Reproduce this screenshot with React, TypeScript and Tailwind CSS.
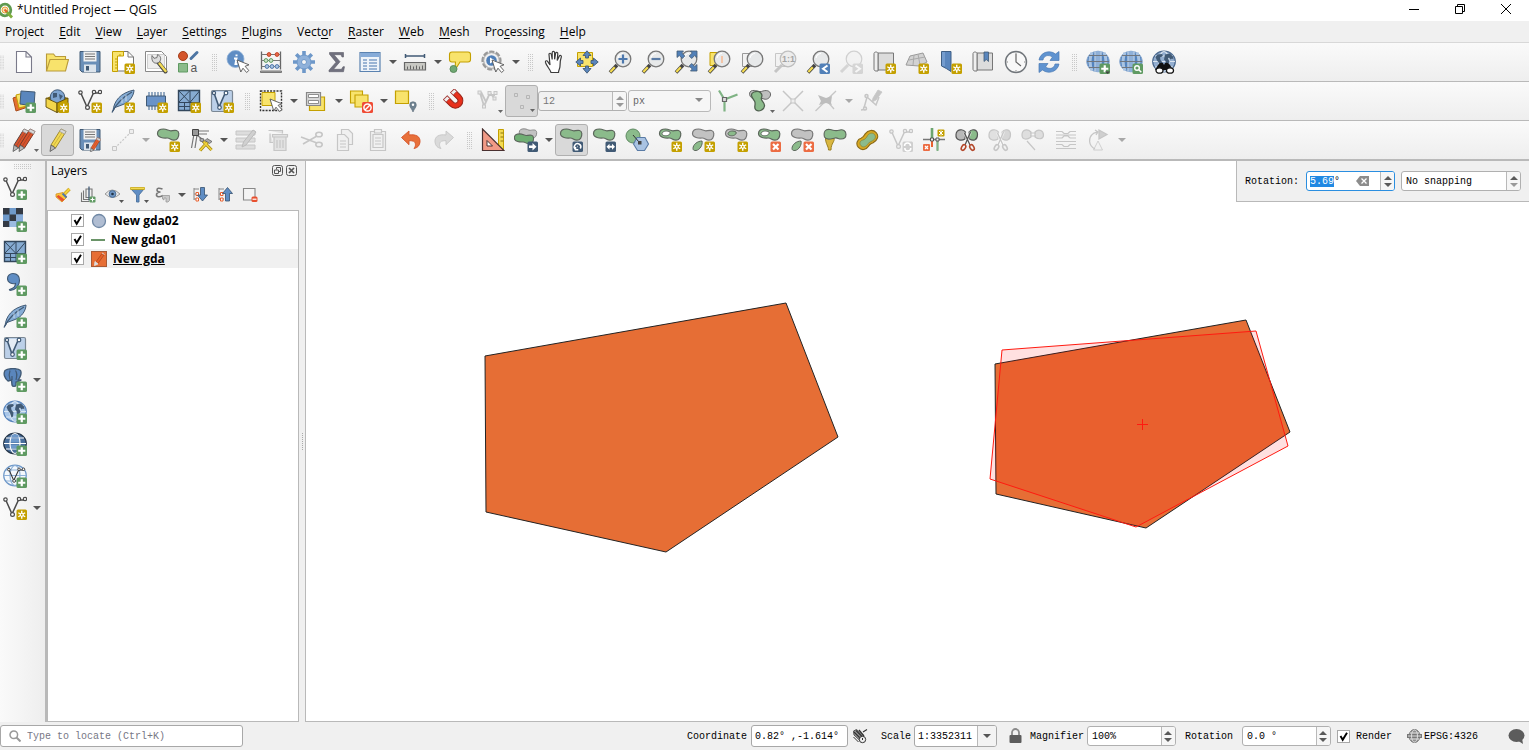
import { useEffect, useRef, useState } from 'react'
import type { ReactNode } from 'react'

const NAVY = '#415a75'
const GREEN = '#8bbb8b'
const YELLOW = '#f8e36c'
const GOLD = '#c4a000'
const GREY = '#c6c6c6'

const BLOB = 'M1.500 5.500C1.500 2 4 1 7.500 1C11 1 12.500 3 15 2.800C18 2.500 22.500 1.200 22.800 5.500C23 9.500 21 12.200 18 12.200C14.500 12.200 14 9.800 11 10C8 10.200 1.500 10 1.500 5.500Z'

/* ---------- badges ---------- */
const badge = (fill: string, mark: ReactNode) => (
  <g>
    <rect x="13.500" y="13.500" width="10.500" height="10.500" rx="1.500" fill={fill} />
    {mark}
  </g>
)
const newBadge = badge(GOLD, <g stroke="#fff" strokeWidth="1.400"><path d="M18.750 14.800v7.900M15.300 16.750l6.900 4M22.200 16.750l-6.900 4" /><circle cx="18.750" cy="18.750" r="2" fill="#fff" stroke="none" /><circle cx="18.750" cy="18.750" r=".9" fill={GOLD} stroke="none" /></g>)
const addBadge = badge('#5f9a62', <path d="M18.750 15.200v7.100M15.200 18.750h7.100" stroke="#fff" strokeWidth="2.200" />)
const delBadge = badge('#ec6c43', <path d="M16 16l5.500 5.500M21.500 16L16 21.500" stroke="#fff" strokeWidth="2.200" />)
const rotBadge = badge(NAVY, <path d="M16.800 21.500a3.200 3.200 0 1 1 4.500-1M18.300 18.500h.5M16.500 19v2.800h2.800" stroke="#fff" strokeWidth="1.500" fill="none" />)
const moveBadge = badge(NAVY, <path d="M14.500 18.750l3-3v2h2.500v-2l3 3-3 3v-2h-2.500v2z" fill="#fff" />)
const arrowBadge = badge(NAVY, <path d="M15 17.500h3.500v-2.500l4 3.700-4 3.700v-2.500H15z" fill="#fff" />)

/* ---------- shared shapes ---------- */
const blob = (fill: string, stroke = '#5c665c') => <path d={BLOB} fill={fill} stroke={stroke} strokeWidth="1.200" />
const pencil = (fill: string, edge: string) => (
  <g>
    <path d="M16 1l5 2.500L10.500 20 6 17z" fill={fill} stroke={edge} strokeWidth="1" />
    <path d="M18.500 2.300L8 18.500" stroke={edge} strokeWidth=".8" opacity=".6" />
    <path d="M16 1l5 2.500-1.500 2.500-5-2.700z" fill="#d8d8d8" stroke="#9a9a9a" strokeWidth=".7" />
    <path d="M6 17l4.500 3L5 23.500z" fill="#b9b9b9" stroke="#555" strokeWidth=".8" />
  </g>
)
const lens = (mark?: ReactNode) => (
  <g>
    <path d="M9 15L2 22.500" stroke="#444" strokeWidth="3.600" />
    <path d="M6.800 17.200L2.300 22" stroke="#f5dc50" strokeWidth="2.200" />
    <circle cx="15" cy="9" r="7.800" fill="#e7e9ea" stroke="#777" strokeWidth="1.300" />
    <path d="M10 8a5.500 5.500 0 0 1 5-4.500" stroke="#fff" strokeWidth="1.200" fill="none" />
    {mark}
  </g>
)
const cursor = <path d="M11 10l3.800 12 2.200-3.800 3.600 4.300 2.200-2-3.700-4.200 3.900-1.500z" fill="#fff" stroke="#555" strokeWidth=".9" />
const vNodes = (stroke = '#4a4a4a', fill = '#fff') => (
  <g stroke={stroke} fill="none" strokeWidth="1.200">
    <path d="M3 4.500l6 13.500 6.500-14H22" strokeWidth="1.500" />
    <g fill={fill}>
      <circle cx="2.500" cy="3.500" r="1.700" /><circle cx="16" cy="3" r="1.700" />
      <circle cx="22" cy="3" r="1.700" /><circle cx="9.500" cy="18.500" r="1.900" />
    </g>
  </g>
)
const feather = (
  <g>
    <path d="M2 22C3 12 9 4 23 1c0 5-4 12-11 14.500L4 18.500z" fill="#86add6" stroke={NAVY} strokeWidth="1" />
    <path d="M1 23.500C5 15 12 8 21 3" stroke={NAVY} strokeWidth="1.300" fill="none" />
    <path d="M11 9v5M15 6v6" stroke="#d5e3f3" strokeWidth=".8" />
  </g>
)
const globe = (fill: string, line: string, edge: string) => (
  <g fill="none" stroke={line} strokeWidth="1.200">
    <ellipse cx="12" cy="11.500" rx="11.300" ry="10.300" fill={fill} stroke={edge} />
    <ellipse cx="12" cy="11.500" rx="5" ry="10" />
    <path d="M1 11.500h22M3 6h18M3 17h18" />
  </g>
)
const webGlobe = (
  <g fill="none">
    <ellipse cx="12" cy="11.500" rx="11.300" ry="10.300" fill="#5484be" stroke="#8aa9cf" />
    <path d="M6 2.500q-4 9 0 18M18 2.500q4 9 0 18" stroke="#aac4e2" strokeWidth="3" />
    <path d="M12 1v21" stroke="#8fb0d8" strokeWidth="5" />
    <path d="M9 1.500v20M15 1.500v20" stroke="#dfe8f2" />
    <path d="M1 11.500h22M3 5.500h18M3 17.500h18" stroke="#70767e" strokeWidth="1.100" />
  </g>
)
const continents = (
  <path d="M3.500 7l2-2.500 4-.5 1.500 1-1 1.500-2 1 .5 2.500 2 2.500-.5 4-1.500 1-1.500-4.500-2-2.500zM13 4.500l5-1 3 3 .5 3-1.500-1-1.500 1-1.500-2-1 1 1.500 3-2 4-1.500-.5-.5-4-1.500-1.500.5-2.500z" fill={NAVY} />
)
const floppy = (
  <g>
    <path d="M2 1.500h20v20.500H4l-2-2z" fill="#6a8fb8" stroke={NAVY} strokeWidth="1" />
    <path d="M5.500 1.500h13v10h-13z" fill="#f1f1f1" />
    <path d="M7 4h10M7 6.500h10M7 9h10" stroke="#777" strokeWidth="1" />
    <path d="M6 14.500h12V22H6z" fill="#dce4ec" /><path d="M8 16h3v4.500H8z" fill={NAVY} />
  </g>
)
const mesh = (
  <g>
    <path d="M1.500 1.500h21v20h-21z" fill="#86abd2" stroke="#33475c" strokeWidth="1.400" />
    <path d="M1.500 13.500h21M13 1.500V21.500M1.500 1.500L13 13.500M13 1.500L1.500 13.500M22.500 2L13 13.500M7.500 13.500v8M1.500 17.500h11.500" stroke="#33475c" strokeWidth="1" fill="none" />
    <path d="M13.500 14h8.500v3h-8.500z" fill="#6c93bf" />
  </g>
)
const vBox = (
  <g>
    <rect x="1.500" y="1.500" width="21" height="21" rx="1.500" fill="#bcd0e8" stroke="#7a8794" strokeWidth="1.200" />
    <path d="M3 3l6 16 6-16z" fill="#e4ecf5" />
    <g fill="#fff" stroke={NAVY} strokeWidth="1.200"><path d="M4 4l5 14 6-13.500" fill="none" strokeWidth="1.600" /><circle cx="4" cy="4" r="1.600" /><circle cx="16" cy="4" r="1.800" /><circle cx="9.500" cy="18.500" r="1.800" /></g>
  </g>
)
const scissors = (blade: string, handle: string, a: string, b: string) => (
  <g>
    <path d="M10.500 4C8 .5 1.500 1 1 6.500S6 13.500 10 11z" fill={a} stroke={blade} strokeWidth="1.200" />
    <path d="M14 4c2.500-3.500 8.500-3 8.500 2.500S18.500 13.500 14.500 11z" fill={b} stroke={blade} strokeWidth="1.200" />
    <path d="M9.500 5l5.500 12M15.500 4L10 17" stroke="#fff" strokeWidth="2.800" opacity=".6" />
    <path d="M9.500 5l5.500 12M15.500 4L10 17" stroke={blade} strokeWidth="1.300" />
    <ellipse cx="8.500" cy="19.500" rx="1.900" ry="3" transform="rotate(30 8.500 19.500)" stroke={handle} strokeWidth="1.600" />
    <ellipse cx="17" cy="19.500" rx="1.900" ry="3" transform="rotate(-30 17 19.500)" stroke={handle} strokeWidth="1.600" />
  </g>
)
const scroll = (
  <g>
    <path d="M6 3h15.500v17H6z" fill="#dcdcdc" stroke="#777" strokeWidth="1" />
    <path d="M2 3.500c0-2 4-2 4 0v17.500H4c-1.500 0-2-1-2-2z" fill="#efefef" stroke="#777" strokeWidth="1" />
  </g>
)
const hole = <path d="M4 5.500C5 2.500 10 2.500 12 4c1 1.500-1 3-2.500 3.500C7 8.200 3.800 7.500 4 5.500z" fill="#fff" stroke="#5c665c" />
const leaf = <path d="M2 20.500c0-4 4.500-7.500 9-7.500 1 3.500-2 9-6 9.500-2 .2-3-.5-3-2z" fill={GREEN} stroke="#5c665c" />

const icons: Record<string, ReactNode> = {
  newProject: <path d="M4.500 1.500H14l5.500 5.500v15.500h-15zM14 1.500V7h5.500" fill="#fff" stroke="#7a7a8a" strokeWidth="1.100" />,
  open: <g fill={YELLOW} stroke="#b89a3a" strokeWidth="1.100"><path d="M1.500 21V4h7l2 2.500h10V10" /><path d="M1.500 21L5 9.500h18.500L20.500 21z" /></g>,
  save: floppy,
  newLayout: <g><path d="M5 1.500h12l5.500 5.500v14H5z" fill="#fff" stroke="#777" /><path d="M17 1.500V7h5.500" fill="none" stroke="#777" /><path d="M1.500 1.500h11V6h-6v15.500h-5z" fill={YELLOW} stroke={GOLD} /><path d="M4 9h2.500M4 12h2.500M4 15h2.500M4 18h2.500M9 4v2" stroke={GOLD} />{newBadge}</g>,
  layoutManager: <g><path d="M1.500 1.500h16l5 5v15h-21z" fill="#fff" stroke="#888" /><path d="M3.500 4.500h17v14h-17z" fill="#eee" stroke="#bbb" strokeWidth=".7" /><path d="M14 12l7.500 9.500" stroke="#444" strokeWidth="4" strokeLinecap="round" /><path d="M15.500 13.500l6 7.500" stroke="#f3dc55" strokeWidth="2.400" strokeLinecap="round" /><path d="M8 5.500l2 2.800 3-.7.500-3c3 1 4 4 2.500 6.500s-5 2.500-6.500 1.200S7.500 8 8 5.500z" fill="#ddd" stroke="#666" strokeWidth=".9" /></g>,
  style: <g><circle cx="6" cy="6" r="4.500" fill="#d4552b" stroke="#a33f1c" /><path d="M14 8.500L20 2.500" stroke="#4d75a3" strokeWidth="3" strokeLinecap="round" /><path d="M1.500 13.500h9v8.500h-9z" fill={GREEN} stroke="#5f9a62" /><text x="13.500" y="21.500" className="text-[12px]" fill="#555" fontFamily="Liberation Sans, sans-serif">a</text></g>,
  identify: <g><circle cx="9.500" cy="9" r="8.500" fill="#5f8dc4" stroke="#8fb0d6" strokeWidth=".8" /><path d="M8 8.500h2.500l-1 5.500h2M10.500 4.500v1.800" stroke="#fff" strokeWidth="2" fill="none" />{cursor}</g>,
  abacus: <g fill="none" strokeWidth="1"><path d="M2.500 1.500v18M21.500 1.500v18" stroke="#666" strokeWidth="1.300" /><path d="M2.500 4.500h19M2.500 10.500h19M2.500 16.500h19" stroke="#777" /><path d="M1.500 21h21v1.500h-21z" fill="#aaa" stroke="#777" /><g stroke="#c4472a" fill="#e9694a"><circle cx="10" cy="4.500" r="1.900" /><circle cx="18" cy="4.500" r="1.900" /></g><g stroke="#5f9a62" fill="#c8e0c8"><circle cx="7" cy="10.500" r="1.900" /><circle cx="12" cy="10.500" r="1.900" /></g><g stroke="#4f77a8" fill="#a9c3e3"><circle cx="8" cy="16.500" r="1.900" /><circle cx="13" cy="16.500" r="1.900" /><circle cx="18" cy="16.500" r="1.900" /></g></g>,
  gear: <g stroke="#6e98c9" fill="none"><path d="M12 1v22M1 12h22M4.200 4.200l15.600 15.600M19.800 4.200L4.200 19.800" strokeWidth="3.600" /><circle cx="12" cy="12" r="7" fill="#8fb1da" strokeWidth="1" /><circle cx="12" cy="12" r="2.500" fill="#f5f5f5" strokeWidth="1" /></g>,
  sigma: <path d="M4.500 2.500h14v4.500h-1.500l-1-2.300H9l6 7-6.500 7.600h8l1.500-2.600h1.500l-1 5H4v-1.500l7-8-6.500-8z" fill="#70707e" stroke="#5e5e6a" strokeWidth=".6" />,
  table: <g><path d="M2 2.500h20v19H2z" fill="#eef3f9" stroke="#5a82b0" strokeWidth="1.200" /><path d="M2.500 3h19v4h-19z" fill="#86abd8" /><path d="M5 10h4M11 10h8M5 13h4M11 13h8M5 16h4M11 16h8M5 19h4M11 19h8" stroke="#7fa0c8" strokeWidth="1.300" /></g>,
  ruler: <g><path d="M2 6h20M2.500 4v4M21.500 4v4" stroke={NAVY} strokeWidth="1.500" /><path d="M1.500 12.500h21v7.500h-21z" fill="#c9c9c4" stroke="#666" strokeWidth="1.200" /><path d="M4.500 19.500v-3M7.500 19.500v-4M10.500 19.500v-3M13.500 19.500v-4M16.500 19.500v-3M19.500 19.500v-4" stroke="#666" /></g>,
  mapTip: <g><path d="M4 2h16q2.500 0 2.500 2.500v5q0 2.500-2.500 2.500h-8l-5 8 .5-8H4q-2.500 0-2.500-2.500v-5Q1.500 2 4 2z" fill={YELLOW} stroke={GOLD} strokeWidth="1.100" /><circle cx="5.500" cy="19" r="3.500" fill="#6fa873" stroke="#5a8a5c" /></g>,
  action: <g><circle cx="10.500" cy="10.500" r="8.800" fill="#ddd" stroke="#999" strokeWidth="2.600" strokeDasharray="5 1.500" /><circle cx="10.500" cy="10.500" r="7.800" fill="#f0f0f0" stroke="#aaa" /><circle cx="10.500" cy="10.500" r="5.300" fill="#4f7fb8" /><path d="M9 7.500l5 3-5 3z" fill="#fff" />{cursor}</g>,
  pan: <path d="M8 22.500C7 19 3.500 16 2.500 12.500c-.5-2 1.500-2.300 2.300-.8L7 15 6 4.500C5.900 2.800 8 2.800 8.300 4.500l.9 5V2.800c0-2 2.300-2 2.400 0v6.500l1-5.800c.3-1.800 2.400-1.400 2.200.4l-.6 6.600 2-4.300c.8-1.600 2.700-.7 2.100.8C17 10.500 17 14 17 16c0 3-1.500 4-1.500 6.500z" fill="#fff" stroke="#3c3c3c" strokeWidth="1.200" transform="translate(1 0)" />,
  panSelection: <g><path d="M2.500 2.500h15v14h-15z" fill={YELLOW} stroke={GOLD} /><path d="M12 .8l4 4.700h-2.500V8h-3V5.500H8zM12 23.200l4-4.700h-2.500V16h-3v2.500H8zM.8 12l4.700-4v2.500H8v3H5.500V16zM23.200 12l-4.700-4v2.500H16v3h2.500V16z" fill="#5a86bd" stroke={NAVY} strokeWidth=".9" /></g>,
  zoomIn: lens(<path d="M15 4.500v9M10.500 9h9" stroke="#4d78ad" strokeWidth="2.200" />),
  zoomOut: lens(<path d="M10.500 9h9" stroke="#5a7ba5" strokeWidth="2.200" />),
  zoomFull: <g>{lens()}<path d="M3 1h6.500L7.800 3l3 3-2.500 2.500-3-3L3 7.500zM23 1h-6.500l1.700 2-3 3 2.500 2.500 3-3L23 7.500zM23 21h-6.500l1.700-2-3-3 2.500-2.500 3 3 2.300-2z" fill="#5180b8" stroke={NAVY} strokeWidth=".8" /></g>,
  zoomSelection: <g><path d="M3 2.500h12v13H3z" fill={YELLOW} stroke={GOLD} />{lens(<path d="M14 6h2v7h-2z" fill="#f3c5a8" />)}</g>,
  zoomLayer: <g><path d="M2.500 3.500h12v13h-12z" fill="#f2f2f2" stroke="#999" />{lens()}</g>,
  zoomNative: <g opacity=".5"><path d="M2.500 3.500h12v13h-12z" fill="#f2f2f2" stroke="#999" /><path d="M9 15L2 22" stroke="#999" strokeWidth="3" /><circle cx="15" cy="9" r="7.800" fill="#e4e4e4" stroke="#888" strokeWidth="1.200" /><text x="9" y="12" className="text-[9px] font-bold" fill="#555" fontFamily="Liberation Sans, sans-serif">1:1</text></g>,
  zoomLast: <g>{lens()}{badge('#5180b8', <path d="M21.500 15.500l-4.500 3.200 4.500 3.300" stroke="#fff" strokeWidth="2" fill="none" />)}</g>,
  zoomNext: <g opacity=".4"><path d="M9 15L2 22" stroke="#aaa" strokeWidth="3" /><circle cx="15" cy="9" r="7.800" fill="#eee" stroke="#999" strokeWidth="1.200" />{badge('#aaa', <path d="M16.500 15.500l4.500 3.200-4.500 3.300" stroke="#fff" strokeWidth="2" fill="none" />)}</g>,
  newMap: <g>{scroll}{newBadge}</g>,
  new3d: <g><path d="M1 15L5 6l13-3 4 9-8 4z" fill="#d2d2d2" stroke="#9a9a9a" /><path d="M4 10l16-3M9 5l-1 10M13 4l2 11" stroke="#aaa" fill="none" />{newBadge}</g>,
  newBookmark: <g><path d="M3.500 1.500h9.500v20l-4.700-3-4.800-2.500z" fill="#5a86bd" stroke="#3f5f85" /><path d="M4 2h3v14H4z" fill="#86abd8" opacity=".6" />{newBadge}</g>,
  bookmarks: <g>{scroll}<path d="M13 2h4.500v9.500l-2.200-2-2.300 2z" fill="#5a86bd" stroke={NAVY} strokeWidth=".8" /></g>,
  clock: <g><circle cx="12" cy="12" r="10.500" fill="#f8f8f8" stroke="#70757a" strokeWidth="1.400" /><path d="M12 4v8l5 4" stroke="#666" strokeWidth="1.200" fill="none" /><path d="M12 2.500v1.500M12 20v1.500M2.500 12H4M20 12h1.500" stroke="#888" /></g>,
  refresh: <g fill="#5f93d0" stroke="#4a7ab3" strokeWidth=".7"><path d="M2 10C3 3 12-1 18.500 4L22 1.500V10.500h-9L15.500 7C11 4 6.500 6 6 10z" /><path d="M22 14c-1 7-10 11-16.500 6L2 22.500V13.500h9L8.500 17c4.500 3 9 1 9.500-3z" /></g>,
  webAdd: <g>{webGlobe}{addBadge}<path d="M19 21.500h5L21.500 24z" fill="#444" /></g>,
  webSearch: <g>{webGlobe}{badge('#5f9a62', <g stroke="#fff" fill="none" strokeWidth="1.400"><circle cx="18" cy="18" r="2.300" /><path d="M19.800 19.800l2.500 2.500" /></g>)}</g>,
  webBinoculars: <g>{globe('#93aed0', '#dbe5f0', '#4c6a90')}{continents}<path d="M6 15q2-3 5-2l1 2 1-2q3-1 5 2l3 5H3z" fill="#111" /><ellipse cx="7.500" cy="20.500" rx="3.500" ry="2.700" fill="#fff" stroke="#111" strokeWidth="1.300" /><ellipse cx="18" cy="20.500" rx="3.500" ry="2.700" fill="#fff" stroke="#111" strokeWidth="1.300" /></g>,

  dataSource: <g><path d="M1 9l11-4 4 13-12 4z" fill="#e5702f" stroke="#a84c1c" /><path d="M4 6l12-3 3 13-12 3z" fill={YELLOW} stroke={GOLD} /><path d="M9 2l14 1-1 14-14-2z" fill="#5a86bd" stroke={NAVY} />{addBadge}</g>,
  newGpkg: <g><path d="M1 9l11-4 11 4-11 5z" fill="#8c6f10" /><circle cx="12.500" cy="8" r="7.200" fill="#7ea4d0" stroke={NAVY} /><path d="M8 4l4 0 0 4-4 1zM14 5l4 2-3 4z" fill={NAVY} /><path d="M1 9l11 5v9.500L1 18z" fill="#f3d64a" stroke="#5e4a08" strokeWidth=".9" /><path d="M23 9l-11 5v9.500L23 18z" fill={GOLD} stroke="#5e4a08" strokeWidth=".9" />{newBadge}</g>,
  newShp: <g>{vNodes()}{newBadge}</g>,
  newSpatialite: <g>{feather}{newBadge}</g>,
  newMemory: <g><path d="M5 3v18M8 3v18M11 3v18M14 3v18M17 3v18M20 3v18" stroke="#55789f" strokeWidth="1.200" /><path d="M2.500 7h19v10h-19z" fill="#6a93c8" stroke={NAVY} />{newBadge}</g>,
  newMesh: <g>{mesh}{newBadge}</g>,
  newVirtual: <g>{vBox}{newBadge}</g>,
  select: <g><path d="M1.500 2h21v19.500h-21z" fill="none" stroke="#333" strokeWidth="1.400" strokeDasharray="2 1.200" /><path d="M3 3.500h13v13H3z" fill={YELLOW} stroke={GOLD} />{cursor}</g>,
  selectValue: <g><path d="M5.500 8h15v13.500h-15z" fill={YELLOW} stroke={GOLD} strokeWidth="1.200" /><path d="M2.500 3.500h14v13h-14z" fill="#d8d8d8" stroke="#888" strokeWidth="1.200" /><path d="M4.500 5.500h10v3h-10zM4.500 11.500h10v3h-10z" fill="#fff" stroke="#777" strokeWidth=".8" /></g>,
  deselect: <g fill={YELLOW} stroke={GOLD} strokeWidth="1.100"><path d="M1.500 2h12v12h-12z" /><path d="M6 6h13v12H6z" /><rect x="13" y="13" width="11" height="11" rx="1.500" fill="#ef4b35" stroke="none" /><circle cx="18.500" cy="18.500" r="3.600" fill="none" stroke="#fff" strokeWidth="1.500" /><path d="M16 21l5-5" stroke="#fff" strokeWidth="1.500" /></g>,
  selectLocation: <g><path d="M1.500 2h13v12.500h-13z" fill={YELLOW} stroke={GOLD} strokeWidth="1.200" /><path d="M19 23c-1-3-3.300-4.500-3.300-7a3.300 3.300 0 0 1 6.600 0c0 2.500-2.300 4-3.300 7z" fill="#6f8290" stroke="#5a6b78" strokeWidth=".6" /><circle cx="19" cy="15.800" r="1.200" fill="#fff" /></g>,
  magnet: <g transform="rotate(-45 12 12)"><path d="M5 3v9a7.500 7.500 0 0 0 15 0V3h-5V12a2.500 2.500 0 0 1-5 0V3z" fill="#e8301c" stroke="#99261a" /><path d="M5 3h5v3.500H5zM15 3h5v3.500h-5z" fill="#eee" stroke="#a44" strokeWidth=".8" /></g>,
  snapV: <g stroke={GREY} fill="#e9e9e9"><path d="M4 4l4 13 5-11h6M5 3l5 10 4-9 5 6" strokeWidth="1.800" fill="none" /><rect x="2" y="2" width="3" height="3" /><rect x="12" y="2.500" width="3" height="3" /><rect x="18" y="2.500" width="3" height="3" /><rect x="17" y="8" width="3" height="3" /><rect x="6.500" y="16" width="3" height="3" /></g>,
  snapPts: <g stroke="#b5b5b5" fill="none"><path d="M5.500 4.500h3v3h-3zM17.500 6.500h3v3h-3zM11.500 16.500h3v3h-3z" /></g>,
  topo: <g><path d="M9.500 10.500L4 1.500M9.500 10.500l13-5M9.500 10.500v12" stroke="#7fb384" strokeWidth="2.200" /><path d="M7.500 8.500h4v4h-4z" fill="#ddd" stroke="#666" strokeWidth="1.200" /></g>,
  overlap: <g><path d="M3 2c5-2 7 2 12 0 5-1.500 8 1 7.500 4S19 11 16 10 10 8 6 9 0 4 3 2z" fill="#bfbfbf" stroke="#666" /><path d="M6 3c6-2 9 2 7.500 5.500s3.500 4.500 3 8.500-5.500 6-8.500 4 .5-6-1.500-9S1 5 6 3z" fill={GREEN} stroke="#4f604f" strokeWidth="1.300" /></g>,
  tracing: <g stroke={GREY} strokeWidth="1.500"><path d="M2 2l20 20M22 2L2 22" /><path d="M10 10h4v4h-4z" fill="#eee" strokeWidth="1" /></g>,
  selfSnap: <g stroke={GREY} strokeWidth="1.300"><path d="M1.500 22L22 2M13 12l7 8" /><path d="M4 6l8 3 6-2-1 7 1 2-6-2-7 2 2-4z" fill="#bdbdbd" stroke="none" /></g>,
  traceEdit: <g stroke={GREY} fill="none" strokeWidth="1.500"><path d="M2 21l6-1M5 19L8 8l9 8 3-8" /><path d="M14 9l5-8 4 2-6 8-4 2z" fill={GREY} strokeWidth=".8" /><circle cx="7.500" cy="7" r="1.500" fill="#eee" /><circle cx="6" cy="19.500" r="1.500" fill="#eee" /></g>,

  currentEdits: <g><g transform="translate(-4 0)">{pencil('#d9532c', '#5a4440')}</g><g transform="translate(2 0)">{pencil('#d9532c', '#7a3a28')}</g></g>,
  toggleEdit: pencil('#f3da52', '#a08a30'),
  saveEdits: <g>{floppy}<g transform="translate(9 9) scale(.65)">{pencil('#e8602f', '#a33f1c')}</g></g>,
  digitize: <g stroke={GREY} fill="none"><path d="M4 20L20 4" strokeWidth="1.200" strokeDasharray="2 1.500" /><path d="M1.500 18.500h4v4h-4zM18.500 1.500h4v4h-4z" fill="#eee" /></g>,
  addPolygon: <g>{blob(GREEN)}{newBadge}</g>,
  vertexTool: <g><path d="M5 6L2.500 20M8 7L6 20M7 3h13M9 6h9M8 7l6 5" stroke="#777" strokeWidth="1.200" /><path d="M3.500 1.500h6v6h-6z" fill="#999" stroke="#444" /><path d="M11 22.500l9-10M14 13l8.500 9" stroke="#a08610" strokeWidth="3.200" /><path d="M11 22.500l9-10M14 13l8.500 9" stroke="#f0d23c" strokeWidth="1.800" /><path d="M18 10.500l5 3-2.500 2-4.500-3zM11 10l4 1-1 3-3-1z" fill="#aaa" stroke="#555" strokeWidth=".7" /></g>,
  modifyAttrs: <g><path d="M2 3h19v4H2zM2 10h19v4H2zM2 17h19v4H2z" fill="#ddd" stroke={GREY} /><path d="M8 19l1.500-5L19 2l3 2L12 17z" fill="#d0d0d0" stroke="#bbb" /></g>,
  trash: <g fill="#e2e2e2" stroke={GREY} strokeWidth="1.200"><path d="M1.500 2.500h14v3M3 5.500v9h3" /><path d="M7 9h12v13.500H7zM5.500 6.500h15V9h-15z" /><path d="M10 12v8M13 12v8M16 12v8" /></g>,
  cut: <g stroke={GREY} fill="none" strokeWidth="1.600"><path d="M1 9l16 6M3 16L17 8" /><ellipse cx="19" cy="6.500" rx="3.200" ry="2.300" /><ellipse cx="19" cy="16.500" rx="3.200" ry="2.300" /></g>,
  copy: <g fill="#f0f0f0" stroke={GREY} strokeWidth="1.200"><path d="M8.500 1.500h7l4 4v11h-11z" /><path d="M4.500 6.500h7l4 4v12h-11z" /><path d="M7 13h6M7 16h6M7 19h6" /></g>,
  paste: <g fill="#f0f0f0" stroke={GREY} strokeWidth="1.200"><path d="M4.500 3.500h15v19h-15z" /><path d="M7 6.500h10v13H7zM8.500 1.500h7v3.500h-7z" /><path d="M9 10h6M9 13h6M9 16h6" /></g>,
  undo: <path d="M2.500 9.500L10 3v4c7-1 11.500 1.500 11 7-.3 4-3 6-6 6.500 2-2.500 2-6-.5-7.300-1.500-.5-3-.5-4.500-.5v4z" fill="#e8703a" stroke="#d4552b" strokeWidth=".9" />,
  redo: <path d="M21.500 9.500L14 3v4C7 6 2.500 8.500 3 14c.3 4 3 6 6 6.500-2-2.500-2-6 .5-7.300 1.500-.5 3-.5 4.500-.5v4z" fill="#dadada" stroke={GREY} strokeWidth=".9" />,
  advanced: <g><path d="M17.500 1.500h5v20h-5z" fill="#f3da52" stroke={GOLD} /><path d="M19.500 5h3M19.500 9h3M19.500 13h3" stroke="#8a7410" /><path d="M1.500 1v21.500H23z" fill="#f09a86" stroke="#4a3030" strokeWidth="1.200" /><path d="M6 12.500v5.500h5.500z" fill="#fff" stroke="#4a3030" /></g>,
  moveFeature: <g><g transform="translate(4 0) scale(.82)">{blob('#c2c2c2', '#888')}</g><g transform="translate(-1 5) scale(.9)">{blob('#6fae73')}</g>{arrowBadge}</g>,
  rotateFeature: <g>{blob(GREEN)}{rotBadge}</g>,
  scaleFeature: <g>{blob(GREEN)}{moveBadge}</g>,
  simplify: <g><circle cx="8" cy="8" r="7" fill={GREEN} stroke="#5f8a62" /><path d="M12 9.500h8l3.500 6.500-4 6.500h-7L8.500 16z" fill="#a9c3e3" stroke="#5a7ba5" strokeWidth="1.100" /><path d="M8 7l6 7" stroke="#333" /><path d="M13 13h3.500v3.500H13z" fill="#444" /></g>,
  addRing: <g>{blob(GREEN)}{hole}{newBadge}</g>,
  addPart: <g>{blob('#c2c2c2', '#777')}{leaf}{newBadge}</g>,
  fillRing: <g>{blob('#c2c2c2', '#777')}<path d="M4 5.500C5 2.500 10 2.500 12 4c1 1.500-1 3-2.500 3.500C7 8.200 3.800 7.500 4 5.500z" fill={GREEN} stroke="#5c665c" />{newBadge}</g>,
  delRing: <g>{blob(GREEN)}{hole}{delBadge}</g>,
  delPart: <g>{blob('#c2c2c2', '#777')}{leaf}{delBadge}</g>,
  reshape: <g><path d="M2.500 10h8.500c1 4-3 5-3 12H5.500c0-4-3-6-3-12z" fill="#d9b640" stroke="#9a7f20" /><path d="M1.500 9C0 3 3 .8 7 1.500s5 2 9 .7 7 .8 7 4.300-2 4.500-5 4.500-3-1.500-6-1-8.500 3-10.500-1z" fill={GREEN} stroke="#5c665c" strokeWidth="1.100" /></g>,
  offset: <g transform="rotate(-42 12 12)"><path d="M0 11c0-5 5-6.500 8-5 3 1 4 0 6-.5 5-1 9 2 9 6.500s-4 6.500-9 5.500c-2-.5-3-1.500-6-.5-4 1-8-1-8-6z" fill="#d9a820" stroke="#8a6a18" strokeWidth="1.100" /><path d="M3 11.500c0-3.500 3-4 5-3s4 1 6.500 0 6 .5 6 3.500-2.500 4.500-6 3.500-4-1-6-.5-5.500 0-5.500-3.500z" fill={GREEN} stroke="#8a8a40" strokeWidth=".8" /></g>,
  reverse: <g>{vNodes(GREY, '#eee')}{badge('#cfcfcf', <path d="M15.500 18a3 3 0 0 1 6 0M21.800 20a3 3 0 0 1-6 0" stroke="#fff" strokeWidth="1.500" fill="none" />)}</g>,
  trim: <g><path d="M10 0v10" stroke="#6ca56f" strokeWidth="2.600" /><path d="M1 11.500h22M15.500 12v10" stroke="#777" strokeWidth="1.500" /><path d="M10 13v6" stroke="#e8602f" strokeWidth="2" /><path d="M15.500 13v10" stroke="#7fb384" strokeWidth="2" /><path d="M8.500 10h3v3h-3zM14 10h3v3h-3z" fill="#eee" stroke="#555" /><rect x="15.500" y="1.500" width="7" height="7" rx="1" fill={GOLD} /><path d="M17 3l4 4M21 3l-4 4M19 2.500v5" stroke="#fff" /><rect x="1" y="16" width="7" height="7" rx="1" fill="#ec6c43" /><path d="M3 18l3 3M6 18l-3 3" stroke="#fff" strokeWidth="1.300" /></g>,
  splitFeature: scissors('#555', '#b4472a', '#b9b9b9', GREEN),
  splitPart: scissors(GREY, GREY, '#e0e0e0', '#d6d6d6'),
  mergeFeature: <g fill="#dedede" stroke={GREY} strokeWidth="1.200"><path d="M10 4C6 0 1 2 1 7s5 5 9 2z" /><path d="M14 4c4-4 8.500-1 8.500 3S18 12 14 9z" /><path d="M9 5h6M9 8h6M6 13l8 9" /></g>,
  mergeAttrs: <g stroke={GREY} fill="none" strokeWidth="1.200"><path d="M2 3.500h6M16 3.500h6M2 10h6M16 10h6M2 16.500h6M16 16.500h6M2 7h20M2 13.500h20M2 20.500h20M8 3.500l2 2h4l2-2M8 10l2-2h4l2 2M8 16.500l2 2h4l2-2" /></g>,
  rotateSymbol: <g stroke={GREY} fill="none" strokeWidth="1.300"><path d="M8 21C2 18 0 10 7 5l4-1M8 2l3 2-2 3" /><path d="M12 2v9l8-4.500z" fill="#cfcfcf" /><path d="M11 13l-4.500 9h9z" strokeWidth=".8" /></g>,

  addVector: <g>{vNodes()}{addBadge}</g>,
  addRaster: <g><path d="M0 0h20v19H0z" fill="#6f9acb" /><path d="M0 0h6.500v6.500H0zM13 0h7v6.500h-7zM6.500 6.500H13V13H6.500zM0 13h6.500v6H0z" fill="#343a44" /><path d="M13 6.500h7V13h-7z" fill="#86abd8" /><path d="M6.500 13H13v6H6.500z" fill="#9bbbe0" />{addBadge}</g>,
  addMesh: <g>{mesh}{addBadge}</g>,
  addDelimited: <g><path d="M6.500 17.500c4-1 6-3.500 6-6-3 .8-8-.5-8-5 0-3 2.500-5 5.500-5 4 0 6.500 2.800 6.500 7C16.500 14 12.500 18 7 18.500z" fill="#5f8dc4" stroke={NAVY} strokeWidth="1.100" />{addBadge}</g>,
  addSpatialite: <g>{feather}{addBadge}</g>,
  addVirtual: <g>{vBox}{addBadge}</g>,
  addPostgis: <g fill="#5a86bd" stroke={NAVY} strokeWidth="1.400" strokeLinejoin="round"><path d="M2 2.500C5 0 15 0 17.500 2.500 19 5 17 10 15 12h3l-4 2-1 0v3c-.5 1.800-3.500 1.800-4 0l-.5-5L5 13C2 11 0 6 2 2.500z" /><path d="M7 2.500c-1.500 4-1 6 0 9M12.500 2.500c2 3 1.500 5 .5 9.500M9 8v4" fill="none" strokeWidth="1.200" />{<g stroke="none">{addBadge}</g>}</g>,
  addWms: <g>{globe('#a9c6e8', '#d9e6f3', '#5a86bd')}{continents}{addBadge}</g>,
  addWcs: <g>{globe('#4a6f9c', '#fff', '#26374a')}<path d="M9 3q3-1.500 6 0l1 2.500H8zM8 6.500h8v4H8zM8 12.500h8v4H8z" fill="#6f9acb" />{addBadge}</g>,
  addWfs: <g>{globe('#f4f8fc', '#8fb1d8', '#6e98c9')}<g transform="translate(4 3) scale(.75)">{vNodes('#333')}</g>{addBadge}</g>,
}

/* smaller icons of the layer panel, on an 18 px grid */
const panelIcons: Record<string, ReactNode> = {
  styling: <g><path d="M10 8.500l5.500-5.500" stroke="#c8a020" strokeWidth="3.400" /><path d="M10 8.500l5.500-5.500" stroke="#f3d23c" strokeWidth="2" /><path d="M2 8l7-1.500 4 4.500-5 5-6-5z" fill="#f8c63c" stroke="#d49020" strokeWidth=".8" /><path d="M2.500 10.500l5.500 5 2.500-2-6-4.500z" fill="#e8502f" /><path d="M8.500 7.500l4 4" stroke="#4d78ad" strokeWidth="1.800" /></g>,
  addGroup: <g fill="none" stroke="#777" strokeWidth="1.100"><path d="M2.500 6.500v9h8M4.500 4.500v9h8M7 3h6v8.500H7z" /><path d="M10 .5v14" stroke={NAVY} strokeWidth="1.300" /><rect x="10.500" y="10.500" width="6" height="6" rx="1" fill="#5f9a62" stroke="none" /><path d="M13.500 11.500v4M11.500 13.500h4" stroke="#fff" /></g>,
  visibility: <g><path d="M1 8q7-8 15 0-7.500 7-15 0z" fill="#e8e8e8" stroke="#999" /><circle cx="8.500" cy="8" r="3.400" fill="#6f97c6" stroke="#4d6f96" /><circle cx="8.500" cy="8" r="1.300" fill="#234" /></g>,
  filter: <g><path d="M2 3h13l-5 6v7H7.500V9z" fill="#5f8dc4" stroke="#4a6f9c" strokeWidth=".9" /><path d="M1.500 1.500h14v2h-14z" fill="#f3da52" stroke={GOLD} strokeWidth=".7" /></g>,
  expression: <g><path d="M8.500 3Q3 1 3 4q0 2 3.500 2Q2 6.500 2.500 9.500 4 12 9 9.500" fill="none" stroke="#777" strokeWidth="1.600" /><path d="M8.500 9.500h7v5l-1.500 1.500h-2v-4h-2v2l-1.500-1z" fill="#c8c8c8" stroke="#999" strokeWidth=".8" /></g>,
  expand: <g><path d="M3 2v12M3 3h5M3 8h4M3 13h5" stroke="#888" fill="none" /><path d="M5 6.500h2.500v3H5zM5 12h2.500v3H5z" fill="#fff" stroke="#e8602f" /><path d="M9.500 1.500h4V9h3l-5 6-5-6h3z" fill="#5f8dc4" stroke="#35506e" strokeWidth=".8" /></g>,
  collapse: <g><path d="M3 2v12M3 3h5M3 8h4M3 13h5" stroke="#888" fill="none" /><path d="M4.500 6.500H7v3H4.500zM4.500 12H7v3H4.500z" fill="#fff" stroke="#e8602f" /><path d="M9.500 15h4V7.500h3L11.500 1.500l-5 6h3z" fill="#5f8dc4" stroke="#35506e" strokeWidth=".8" /></g>,
  remove: <g><path d="M2.500 2.500h11.500v11.500H2.500z" fill="#f4f4f4" stroke="#888" strokeWidth="1.100" /><rect x="10.500" y="10.500" width="6" height="5.500" rx="1.500" fill="#e8502f" /><path d="M11.500 13.200h4" stroke="#fff" strokeWidth="1.200" /></g>,
}

type Tool = string | { id: string; on?: boolean; menu?: boolean }

const projectTools: Tool[] = ['newProject', 'open', 'save', 'newLayout', 'layoutManager', 'style']
const attributeTools: Tool[] = ['identify', 'abacus', 'gear', 'sigma', 'table', '>', 'ruler', '>', 'mapTip', 'action', '>']
const mapTools: Tool[] = ['pan', 'panSelection', 'zoomIn', 'zoomOut', 'zoomFull', 'zoomSelection', 'zoomLayer', 'zoomNative', 'zoomLast', 'zoomNext', 'newMap', 'new3d', 'newBookmark', 'bookmarks', 'clock', 'refresh']
const webTools: Tool[] = ['webAdd', 'webSearch', 'webBinoculars']
const sourceTools: Tool[] = ['dataSource', 'newGpkg', 'newShp', 'newSpatialite', 'newMemory', 'newMesh', 'newVirtual']
const selectTools: Tool[] = ['select', '>', 'selectValue', '>', 'deselect', '>', 'selectLocation']
const snapTools: Tool[] = ['magnet', { id: 'snapV', menu: true }, { id: 'snapPts', on: true, menu: true }]
const editTools: Tool[] = [{ id: 'currentEdits', menu: true }, { id: 'toggleEdit', on: true }, 'saveEdits', 'digitize', '-', 'addPolygon', 'vertexTool', '>', 'modifyAttrs', 'trash', 'cut', 'copy', 'paste', 'undo', 'redo']
const advancedTools: Tool[] = ['advanced', 'moveFeature', '>', { id: 'rotateFeature', on: true }, 'scaleFeature', 'simplify', 'addRing', 'addPart', 'fillRing', 'delRing', 'delPart', 'reshape', 'offset', 'reverse', 'trim', 'splitFeature', 'splitPart', 'mergeFeature', 'mergeAttrs', 'rotateSymbol', '-']
const sideTools = ['addVector', 'addRaster', 'addMesh', 'addDelimited', 'addSpatialite', 'addVirtual', 'addPostgis', 'addWms', 'addWcs', 'addWfs', 'newShp']

const menus = [['Pro', 'j', 'ect'], ['', 'E', 'dit'], ['', 'V', 'iew'], ['', 'L', 'ayer'], ['', 'S', 'ettings'], ['', 'P', 'lugins'], ['Vect', 'o', 'r'], ['', 'R', 'aster'], ['', 'W', 'eb'], ['', 'M', 'esh'], ['Pro', 'c', 'essing'], ['', 'H', 'elp']]

function Arrow({ dim }: { dim?: boolean }) {
  return <svg width="8" height="4" viewBox="0 0 8 4"><path d="M0 0h8L4 4z" fill={dim ? '#a8a8a8' : '#555'} /></svg>
}

function Handle({ className = 'w-4' }: { className?: string }) {
  return (
    <div className={`${className} shrink-0 flex items-center justify-center`}>
      <svg width="5" height="17" viewBox="0 0 5 17"><path d="M.5 0v17M2.500 0v17M4.500 0v17" stroke="#c8c8c8" strokeDasharray="1 1" /></svg>
    </div>
  )
}

function ToolButton({ id, on, menu }: { id: string; on?: boolean; menu?: boolean }) {
  return (
    <button
      aria-label={id}
      className={`relative w-[33px] h-8 shrink-0 flex items-center rounded-[3px] ${on ? 'bg-[#d9d9d9] border border-[#b0b0b0] pl-[3px]' : 'pl-1'}`}
    >
      <svg width="24" height="24" viewBox="0 0 24 24" fill="none">{icons[id]}</svg>
      {menu && <span className="absolute right-0.5 bottom-1"><svg className="block" width="5" height="3" viewBox="0 0 5 3"><path d="M0 0h5L2.500 3z" fill="#666" /></svg></span>}
    </button>
  )
}

function Tools({ items }: { items: Tool[] }) {
  return (
    <>
      {items.map((t, i) => {
        if (t === '>' || t === '-') return <button key={i} aria-label="More" className="w-3 h-8 shrink-0 flex items-center justify-center"><Arrow dim={t === '-'} /></button>
        return typeof t === 'string' ? <ToolButton key={i} id={t} /> : <ToolButton key={i} {...t} />
      })}
    </>
  )
}

function Toolbar({ children }: { children: ReactNode }) {
  return <div className="h-[39px] shrink-0 flex items-center border-b border-[#b9b9b9] bg-linear-to-b from-[#fafafa] to-[#eeeeee] overflow-hidden">{children}</div>
}

function SpinButtons({ dim, downDim }: { dim?: boolean; downDim?: boolean }) {
  return (
    <span className="w-[14px] h-full shrink-0 flex flex-col items-center justify-center gap-[3px] border-l border-[#b9b9b9] bg-[#f6f6f6] rounded-r-[2px]">
      <button aria-label="Increase"><svg className="block" width="8" height="4" viewBox="0 0 8 4"><path d="M0 4h8L4 0z" fill={dim ? '#999' : '#5a5a5a'} /></svg></button>
      <button aria-label="Decrease"><svg className="block" width="8" height="4" viewBox="0 0 8 4"><path d="M0 0h8L4 4z" fill={dim || downDim ? '#999' : '#5a5a5a'} /></svg></button>
    </span>
  )
}

function Spin({ id, value, className, dim, downDim }: { id: string; value: string; className: string; dim?: boolean; downDim?: boolean }) {
  return (
    <div className={`${className} shrink-0 flex items-center border border-[#b0b0b0] rounded-[3px] ${dim ? 'bg-[#f1f1f1] text-[#777]' : 'bg-white'}`}>
      <input id={id} aria-label={id} defaultValue={value} disabled={dim} className="flex-1 min-w-0 h-full pl-1 bg-transparent outline-none" />
      <SpinButtons dim={dim} downDim={downDim} />
    </div>
  )
}

function Check({ id, label }: { id: string; label: string }) {
  const [on, setOn] = useState(true)
  return (
    <span className="relative w-[13px] h-[13px] shrink-0">
      <input id={id} aria-label={label} type="checkbox" checked={on} onChange={e => setOn(e.target.checked)} className="block appearance-none w-[13px] h-[13px] border border-[#a8a8a8] bg-white" />
      {on && <svg className="absolute inset-0 pointer-events-none" width="13" height="13" viewBox="0 0 13 13"><path d="M3.500 6l2.200 3.800L10 2.800" fill="none" stroke="#000" strokeWidth="1.900" /></svg>}
    </span>
  )
}

function PanelButton({ id, menu }: { id: string; menu?: boolean }) {
  return (
    <button aria-label={id} className="relative w-[25px] h-6 shrink-0 flex items-center pl-[3px]">
      <svg width="18" height="18" viewBox="0 0 18 18" fill="none">{panelIcons[id]}</svg>
      {menu && <span className="absolute right-0.5 bottom-1"><svg className="block" width="5" height="3" viewBox="0 0 5 3"><path d="M0 0h5L2.500 3z" fill="#555" /></svg></span>}
    </button>
  )
}

function LayersPanel() {
  return (
    <aside className="w-[252px] shrink-0 flex flex-col">
      <div className="h-[19px] flex items-center pl-1 pr-0.5 gap-[3px]">
        <h2 className="flex-1">Layers</h2>
        <button aria-label="Float"><svg className="block" width="11" height="11" viewBox="0 0 11 11" fill="none" stroke="#555"><rect x=".5" y=".5" width="10" height="10" rx="2" /><path d="M2.500 5h4v3.500h-4zM4.500 4.500v-2h4v4H7" /></svg></button>
        <button aria-label="Close"><svg className="block" width="11" height="11" viewBox="0 0 11 11" fill="none" stroke="#555"><rect x=".5" y=".5" width="10" height="10" rx="2" /><path d="M3 3l5 5M8 3L3 8" strokeWidth="1.700" /></svg></button>
      </div>
      <div className="h-[30px] flex items-center pl-1">
        <PanelButton id="styling" />
        <PanelButton id="addGroup" />
        <PanelButton id="visibility" menu />
        <PanelButton id="filter" menu />
        <PanelButton id="expression" />
        <button aria-label="More" className="w-3 flex justify-center"><Arrow /></button>
        <PanelButton id="expand" />
        <PanelButton id="collapse" />
        <PanelButton id="remove" />
      </div>
      <ul className="flex-1 bg-white border border-[#b9b9b9] font-bold">
        <li className="h-[19px] flex items-center pl-[23px]">
          <Check id="l2" label="New gda02 visible" />
          <svg className="ml-[7px]" width="16" height="16" viewBox="0 0 16 16"><circle cx="8" cy="8" r="6.500" fill="#b0bdd2" stroke="#7088a5" strokeWidth="1.300" /></svg>
          <label htmlFor="l2" className="ml-1.5">New gda02</label>
        </li>
        <li className="h-[19px] flex items-center pl-[23px]">
          <Check id="l1" label="New gda01 visible" />
          <svg className="ml-[7px]" width="14" height="16" viewBox="0 0 14 16"><path d="M0 8h14" stroke="#6a9468" strokeWidth="2" /></svg>
          <label htmlFor="l1" className="ml-1.5">New gda01</label>
        </li>
        <li className="h-[19px] flex items-center pl-[23px] bg-[#f0f0f0]">
          <Check id="l0" label="New gda visible" />
          <svg className="ml-[7px]" width="16" height="16" viewBox="0 0 16 16"><rect x=".5" y=".5" width="15" height="15" fill="#e66e35" stroke="#a85a35" /><path d="M11 2.500l2 1.500L6.500 13l-2-1.500z" fill="#e85f25" stroke="#a3441c" strokeWidth=".7" /><path d="M4 10.500l3 2.500-3.500 1.500zM11 2l2.500 1.500" fill="#ddd" stroke="#ddd" strokeWidth=".9" /></svg>
          <label htmlFor="l0" className="ml-1.5 underline">New gda</label>
        </li>
      </ul>
    </aside>
  )
}

function RotationBox() {
  const ref = useRef<HTMLInputElement>(null)

  useEffect(() => {
    ref.current?.focus()
    ref.current?.setSelectionRange(0, 4)
  }, [])

  return (
    <div className="absolute right-0 top-0 w-[293px] h-[41px] flex items-center pl-2 bg-[#f0f0f0] border-l border-b border-[#b9b9b9] font-['Liberation_Mono',monospace] text-[10px]">
      <label htmlFor="angle" className="w-[61px]">Rotation:</label>
      <div className="w-[89px] h-5 flex items-center border border-[#2a8ee0] rounded-[3px] bg-white">
        <input id="angle" ref={ref} defaultValue="5.69°" className="flex-1 min-w-0 h-full pl-[3px] bg-transparent outline-none selection:bg-[#2189e3] selection:text-white" />
        <button aria-label="Clear" className="mr-[11px]"><svg className="block" width="13" height="10" viewBox="0 0 13 10"><path d="M4 0h9v10H4L0 5z" fill="#8c8c8c" /><path d="M5.500 2.500l5 5M10.500 2.500l-5 5" stroke="#fff" strokeWidth="1.300" /></svg></button>
        <SpinButtons />
      </div>
      <Spin id="snapping" value="No snapping" className="w-[120px] h-5 ml-1.5" downDim />
    </div>
  )
}

function MapCanvas() {
  return (
    <main className="relative flex-1 min-w-0 bg-white border-l border-b border-[#b9b9b9] overflow-hidden">
      <svg className="block w-full h-full">
        <g fill="#e66e35" stroke="#232323" strokeLinejoin="round">
          <path d="M179 195L480 142L532 276L360 391L180 351Z" />
          <path d="M689 203L940 159L984 271L840 367L690 333Z" />
        </g>
        <path d="M696 189L950 170L982 285L830 366L684 318Z" fill="#ff0000" fillOpacity=".12" stroke="#ff1a10" />
        <path d="M831 263.500h11M836.500 258v11" stroke="#ff1a10" />
      </svg>
      <RotationBox />
    </main>
  )
}

function StatusBar() {
  return (
    <footer className="h-7 shrink-0 flex items-center bg-[#f0f0f0] font-['Liberation_Mono',monospace] text-[10px] pr-1">
      <div className="w-[243px] h-[22px] shrink-0 flex items-center gap-1.5 pl-2 bg-white border border-[#a8a8a8] rounded-[3px]">
        <svg width="12" height="12" viewBox="0 0 12 12" fill="none" stroke="#999" strokeWidth="1.500"><circle cx="4.800" cy="4.800" r="3.800" /><path d="M7.500 7.500l4 4" strokeWidth="2" /></svg>
        <input aria-label="Locate" placeholder="Type to locate (Ctrl+K)" className="flex-1 min-w-0 bg-transparent outline-none placeholder:text-[#777785]" />
      </div>
      <div className="ml-auto flex items-center">
        <label htmlFor="coord" className="w-16">Coordinate</label>
        <input id="coord" defaultValue="0.82° ,-1.614°" className="w-[97px] h-[22px] pl-[3px] bg-white border border-[#a8a8a8] rounded-[3px] outline-none" />
        <button aria-label="Toggle extents" className="mx-1"><svg className="block" width="16" height="16" viewBox="0 0 16 16" fill="none" stroke="#333"><path d="M1.500 3l3-1.500L12 8 8.500 13 2 7z" fill="#999" stroke="#555" /><path d="M2 4l7 7M4 2.500l7 7M7 2l5 6M11 4l4-2.500" strokeWidth="1.200" /><circle cx="10.500" cy="11.500" r="3.200" fill="#eee" /><path d="M10.500 10v2M1.500 9l5 5" /></svg></button>
        <label htmlFor="scale" className="w-[33px] ml-[9px]">Scale</label>
        <div className="relative">
          <select id="scale" className="block appearance-none w-[83px] h-[22px] pl-[3px] bg-white border border-[#a8a8a8] rounded-[3px] outline-none"><option>1:3352311</option></select>
          <span className="absolute right-px top-px bottom-px w-[19px] flex items-center justify-center bg-[#f3f3f3] border-l border-[#b9b9b9] rounded-r-[2px] pointer-events-none"><Arrow /></span>
        </div>
        <button aria-label="Lock scale" className="ml-3 mr-2"><svg className="block" width="13" height="16" viewBox="0 0 13 16"><path d="M3 7V4.500a3.500 3.500 0 0 1 7 0V7" fill="none" stroke="#8a8a8a" strokeWidth="1.800" /><rect x=".5" y="7" width="12" height="8" rx="1" fill="#5c5c5c" /></svg></button>
        <label htmlFor="magnifier" className="w-[57px]">Magnifier</label>
        <Spin id="magnifier" value="100%" className="w-[89px] h-5" />
        <label htmlFor="rotation" className="w-[57px] ml-[9px]">Rotation</label>
        <Spin id="rotation" value="0.0 °" className="w-[89px] h-5 mr-1.5" />
        <Check id="render" label="Render" />
        <label htmlFor="render" className="ml-1.5 mr-[15px]">Render</label>
        <button className="flex items-center gap-0.5">
          <svg width="15" height="14" viewBox="0 0 15 14" fill="none" stroke="#777"><ellipse cx="7.500" cy="7" rx="5.500" ry="6.500" fill="#8f8f8f" /><path d="M0 7h15" strokeWidth="4" /><ellipse cx="7.500" cy="7" rx="3" ry="6" stroke="#ddd" /><path d="M3 4h9M1 7h13M3 10h9" stroke="#ddd" /></svg>
          EPSG:4326
        </button>
        <button aria-label="Messages" className="ml-[30px]"><svg className="block" width="17" height="16" viewBox="0 0 17 16"><ellipse cx="8.500" cy="7.500" rx="8" ry="6.500" fill="#5c5c5c" /><path d="M9 12l6 4-1-6z" fill="#5c5c5c" /></svg></button>
      </div>
    </footer>
  )
}

export default function App() {
  return (
    <div className="h-screen flex flex-col overflow-hidden bg-[#f0f0f0] text-black font-['Open_Sans','Noto_Sans',sans-serif] text-[12px]">
      {/* Title bar */}
      <header className="h-[21px] shrink-0 flex items-center bg-white">
        <svg width="13" height="18" viewBox="0 0 13 18" fill="none"><circle cx="5" cy="8" r="5.800" stroke="#5f9a50" strokeWidth="2.800" /><circle cx="5" cy="8" r="3" fill="#f6e3b0" stroke="#e8a13c" strokeWidth="1" /><path d="M6 9l6 6.500" stroke="#7fae3c" strokeWidth="2.800" /><path d="M4.500 7.500L7 10" stroke="#e8602f" strokeWidth="2" /></svg>
        <h1 className="flex-1 pl-1 pb-0.5">*Untitled Project — QGIS</h1>
        <div className="flex pb-1">
          <button aria-label="Minimize" className="w-[46px] flex justify-center"><svg width="10" height="10" viewBox="0 0 10 10"><path d="M0 5.500h10" stroke="#000" /></svg></button>
          <button aria-label="Restore" className="w-[46px] flex justify-center"><svg width="10" height="10" viewBox="0 0 10 10" fill="none" stroke="#000"><path d="M.5 2.500h7v7h-7zM2.500 2.500v-2h7v7h-2" /></svg></button>
          <button aria-label="Close" className="w-[46px] flex justify-center"><svg width="10" height="10" viewBox="0 0 10 10"><path d="M0 0l10 10M10 0L0 10" stroke="#000" /></svg></button>
        </div>
      </header>

      <nav className="h-[22px] shrink-0 flex items-center gap-[15px] pl-[5px] border-b border-[#d8d8d8]">
        {menus.map(([a, key, b]) => (
          <button key={a + key + b} className="whitespace-nowrap">{a}<span className="underline underline-offset-2">{key}</span>{b}</button>
        ))}
      </nav>

      {/* Toolbars */}
      <Toolbar>
        <Handle className="w-2 pr-1" />
        <Tools items={projectTools} />
        <Handle />
        <Tools items={attributeTools} />
        <Handle />
        <Tools items={mapTools} />
        <Handle />
        <Tools items={webTools} />
      </Toolbar>
      <Toolbar>
        <Handle className="w-2 pr-1" />
        <Tools items={sourceTools} />
        <Handle />
        <Tools items={selectTools} />
        <Handle />
        <Tools items={snapTools} />
        <div className="flex items-center gap-px font-['Liberation_Mono',monospace] text-[10px]">
          <Spin id="tolerance" value="12" className="w-[89px] h-5" dim />
          <div className="relative">
            <select aria-label="Units" disabled className="block appearance-none w-[83px] h-[22px] pl-1 bg-[#f6f6f6] text-[#666] border border-[#b9b9b9] rounded-[3px]"><option>px</option></select>
            <span className="absolute right-2 top-2 pointer-events-none"><svg className="block" width="8" height="5" viewBox="0 0 8 5"><path d="M0 0h8L4 4z" fill="#888" /></svg></span>
          </div>
        </div>
        <Tools items={['topo', { id: 'overlap', menu: true }, 'tracing', 'selfSnap', '-', 'traceEdit']} />
      </Toolbar>
      <Toolbar>
        <Handle className="w-2 pr-1" />
        <Tools items={editTools} />
        <Handle />
        <Tools items={advancedTools} />
      </Toolbar>

      {/* Workspace */}
      <div className="flex-1 min-h-0 flex border-t border-[#b9b9b9]">
        <div className="w-[47px] shrink-0 flex flex-col border-r-2 border-[#b9b9b9] bg-linear-to-r from-[#fafafa] to-[#eeeeee]">
          <div className="h-[11px] pl-[14px] flex items-center">
            <svg width="17" height="5" viewBox="0 0 17 5"><path d="M0 .5h17M0 2.500h17M0 4.500h17" stroke="#c8c8c8" strokeDasharray="1 1" /></svg>
          </div>
          {sideTools.map((id, i) => (
            <div key={i} className="h-8 shrink-0 flex items-center gap-1.5">
              <button aria-label={id} className="w-[27px] pl-[3px]"><svg className="block" width="24" height="24" viewBox="0 0 24 24" fill="none">{icons[id]}</svg></button>
              {(id === 'addPostgis' || id === 'newShp') && <button aria-label="More"><Arrow /></button>}
            </div>
          ))}
        </div>
        <LayersPanel />
        <div className="w-1.5 shrink-0 flex items-center justify-center">
          <svg width="1" height="17" viewBox="0 0 1 17"><path d="M.5 0v17" stroke="#aaa" strokeDasharray="1 1" /></svg>
        </div>
        <MapCanvas />
      </div>

      <StatusBar />
    </div>
  )
}
